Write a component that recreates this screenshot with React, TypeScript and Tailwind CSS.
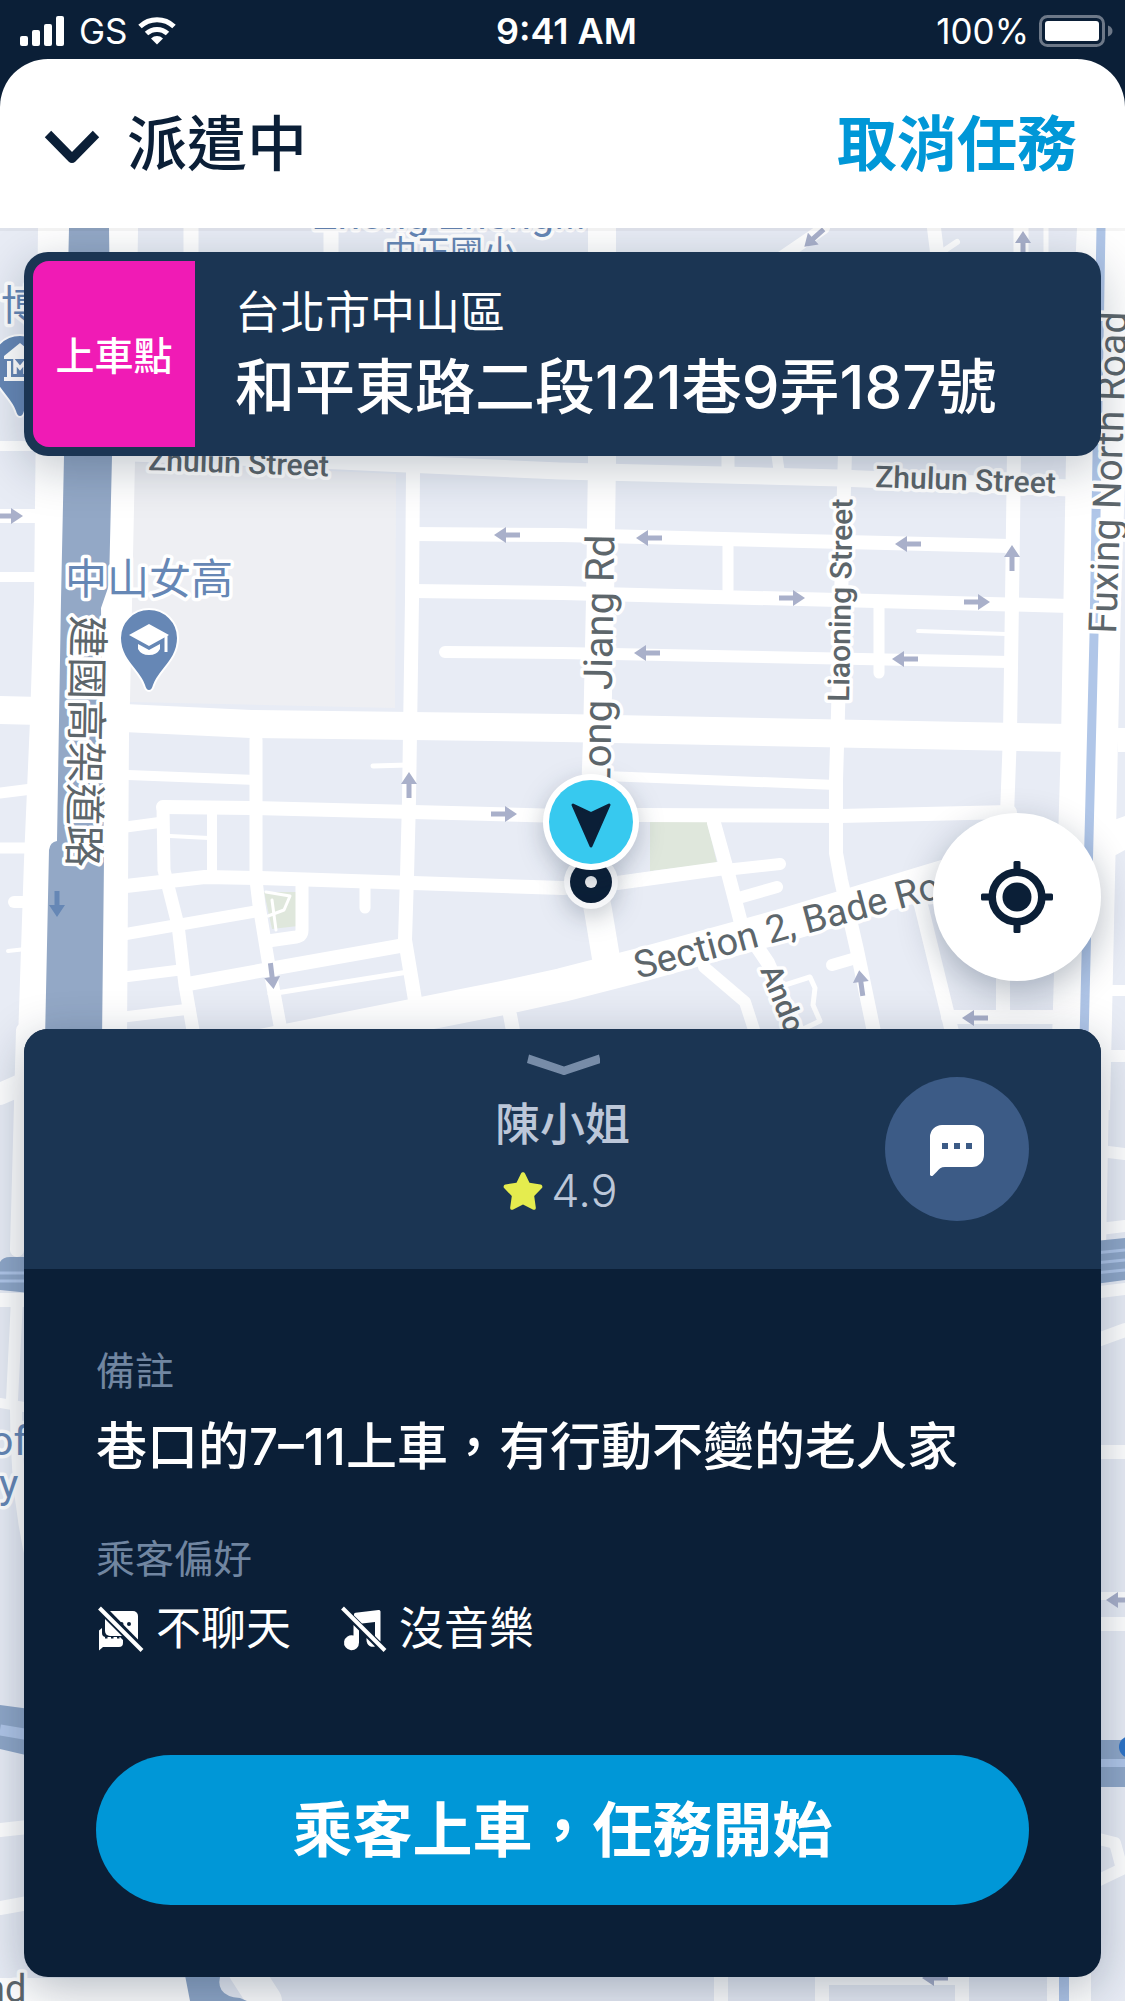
import React from 'react';

const fontStack = "font-['Inter','Noto_Sans_CJK_TC',sans-serif]";

/* ---------- Icons ---------- */

const SignalIcon = () => (
  <svg className="w-[45px] h-[30px]" viewBox="0 0 45 30" fill="white" aria-hidden="true">
    <rect x="0" y="20" width="8" height="10" rx="2" />
    <rect x="12" y="14" width="8" height="16" rx="2" />
    <rect x="24" y="8" width="8" height="22" rx="2" />
    <rect x="36" y="0" width="8" height="30" rx="2" />
  </svg>
);

const WifiIcon = () => (
  <svg className="w-[38px] h-[28px]" viewBox="0 0 38 28" fill="none" aria-hidden="true">
    <path d="M2 9.500C11.500 0.500 26.500 0.500 36 9.500" stroke="white" strokeWidth="5" />
    <path d="M8.500 16.500C14.500 11 23.500 11 29.500 16.500" stroke="white" strokeWidth="5" />
    <path d="M13 21.500C16.500 18.200 21.500 18.200 25 21.500L19 27.500Z" fill="white" />
  </svg>
);

const BatteryIcon = () => (
  <svg className="w-[74px] h-8" viewBox="0 0 74 32" fill="none" aria-hidden="true">
    <rect x="1.500" y="1.500" width="63" height="29" rx="7" stroke="#6d7888" strokeWidth="3" />
    <rect x="6" y="6" width="54" height="20" rx="3" fill="white" />
    <path d="M69 10.500C75 12.500 75 19.500 69 21.500Z" fill="#6d7888" />
  </svg>
);

const ChevronIcon = () => (
  <svg className="w-14 h-10" viewBox="0 0 56 40" fill="none" aria-hidden="true">
    <path d="M4 10L28 34.500L52 10" stroke="#0b1f37" strokeWidth="9" strokeLinejoin="round" />
  </svg>
);

const LocateIcon = () => (
  <svg className="w-[72px] h-[72px]" viewBox="0 0 72 72" fill="none" aria-hidden="true">
    <g fill="#0b1f37">
      <rect x="32.500" y="0" width="7" height="12" rx="1.500" />
      <rect x="32.500" y="60" width="7" height="12" rx="1.500" />
      <rect x="0" y="32.500" width="12" height="7" rx="1.500" />
      <rect x="60" y="32.500" width="12" height="7" rx="1.500" />
      <circle cx="36" cy="36" r="14.500" />
    </g>
    <circle cx="36" cy="36" r="24.800" stroke="#0b1f37" strokeWidth="7.600" />
  </svg>
);

const ChatIcon = () => (
  <svg className="w-[54px] h-[52px]" viewBox="0 0 54 52" aria-hidden="true">
    <path
      d="M12 0H42A12 12 0 0 1 54 12V30A12 12 0 0 1 42 42H15C11 42 9 44 7 46.500L3 50.500C2 51.500 0 51 0 49.500V12A12 12 0 0 1 12 0Z"
      fill="white"
    />
    <path d="M12 18h6v6h-6zM24 18h6v6h-6zM36 18h6v6h-6z" fill="#3c5b86" />
  </svg>
);

const StarIcon = () => (
  <svg className="w-10 h-[38px]" viewBox="0 0 40 38" aria-hidden="true">
    <path
      d="M18 1.500C18.800 -0.200 21.200 -0.200 22 1.500L26.500 10.800L37.500 12.400C39.400 12.700 40 15 38.700 16.300L31.200 24L32.800 35.500C33.100 37.300 31.300 38.300 29.800 37.500L20 32.600L10.200 37.500C8.700 38.300 6.900 37.300 7.200 35.500L8.800 24L1.300 16.300C0 15 0.600 12.700 2.500 12.400L13.500 10.800Z"
      fill="#e5ec4e"
    />
  </svg>
);

const ChatOffIcon = () => (
  <svg className="w-12 h-12" viewBox="0 0 48 48" aria-hidden="true">
    <path d="M14 6H37A5 5 0 0 1 42 11V34.500L37.500 30Z" fill="white" />
    <path d="M9 14L26 31H14A5 5 0 0 1 9 26Z" fill="white" />
    <path d="M3 25.500L6 23V28A4 4 0 0 0 10 32H24L27 35V38A4 4 0 0 1 23 42H7L3 45.500Z" fill="white" />
    <circle cx="25.500" cy="19" r="2" fill="#0b1f37" />
    <circle cx="33" cy="19" r="2" fill="#0b1f37" />
    <path d="M9 32.500h2.500M15 32.500h2.500M21 32.500h2.500" stroke="#0b1f37" strokeWidth="2" />
    <path d="M3.500 3L46 45.500" stroke="white" strokeWidth="4" />
  </svg>
);

const MusicOffIcon = () => (
  <svg className="w-12 h-12" viewBox="0 0 48 48" aria-hidden="true">
    <path d="M15 9.500C15 8.500 15.700 7.800 16.600 7.700L39.500 5C40.500 4.900 41.500 5.600 41.500 6.600V36.500L36 31V17L23 18.500L15 10.500Z" fill="white" />
    <path d="M14.500 20L20 25.500V37.500A7.500 7.500 0 1 1 14.500 30.500Z" fill="white" />
    <path d="M27.500 33L36 41.500C31 43 27 39.500 27.500 33Z" fill="white" />
    <path d="M3.500 3L46 45.500" stroke="white" strokeWidth="4" />
  </svg>
);

/* ---------- Map ---------- */

// [width, path]
const roads: [number, string][] = [
  // west side
  [10, 'M0 446H40'],
  [14, 'M0 516H40'],
  [10, 'M0 577H40'],
  [28, 'M0 710L40 711'],
  [11, 'M0 793L32 789'],
  [11, 'M0 848H32'],
  [12, 'M14 902H32'],
  [4, 'M8 951L26 949'],
  // top edge
  [15, 'M191 228V260'],
  [15, 'M331 228V260'],
  [14, 'M934 228L938 260'],
  [15, 'M1021 228V260'],
  [5, 'M1046 228V260'],
  [12, 'M824 228L780 258'],
  [6, 'M942 252L957 242'],
  // east-west streets
  [17, 'M130 453L340 461L560 471L840 478L1070 488'],
  [14, 'M413 534L562 535L1010 546'],
  [14, 'M413 591L562 593L1070 606'],
  [12, 'M445 652L562 653L1010 662'],
  [4, 'M918 631L1006 634'],
  [28, 'M124 718L251 724L563 728L1070 738'],
  [10, 'M128 775L256 780'],
  [5, 'M373 766L408 765'],
  [14, 'M163 807L251 808L413 812L562 816L640 815L840 816L1010 812'],
  [10, 'M605 776L836 785'],
  [14, 'M126 886L205 877L260 878L413 883L563 888L617 883L725 868'],
  [12, 'M725 870L780 864'],
  // north-south streets
  [14, 'M413 470L412 600L409 800L407 876L405 940L415 1000'],
  [28, 'M602 228V460L600 600L597 740L592 880L598 910L608 970'],
  [14, 'M845 452L844 487L838 713L836 780V853L841 880L857 950L874 1032'],
  [14, 'M1014 452L1012 600L1010 733L1007 815'],
  [14, 'M1003 960V1012'],
  [13, 'M728 456V470'],
  [11, 'M728 546V590M777 456L779 470'],
  [11, 'M879 606V673'],
  [13, 'M163 807L164 870L178 925L185 985L194 1036'],
  [10, 'M212 812V876'],
  [4, 'M170 836L209 838'],
  [13, 'M256 740V880L259 905L268 960L282 1036'],
  [11, 'M126 827L163 822'],
  [12, 'M126 934L258 911'],
  [11, 'M124 977L180 970'],
  [14, 'M188 984L270 969L405 945'],
  [5, 'M270 994L408 972'],
  [11, 'M124 1017L190 1009'],
  [13, 'M302 885V930Q302 936 296 937L268 941'],
  [11, 'M365 885V908'],
  // Bade Road and what branches off it
  [34, 'M230 1052L503 998L562 985L640 965L785 925L960 872'],
  [14, 'M714 823L729 877L741 923L768 963L800 1036'],
  [12, 'M742 897L777 887'],
  [12, 'M832 965L856 958'],
  [12, 'M704 967L745 1002L756 1036'],
  [5, 'M785 985L810 977L815 988L813 1005L820 1021L795 1033'],
  [14, 'M921 905L953 1036'],
  [14, 'M948 1017H1060'],
  [14, 'M510 1015L514 1036'],
  // lower west strip
  [22, 'M0 1094L32 1080'],
  [14, 'M23 1030L17 1250'],
  [14, 'M0 1300H28'],
  [12, 'M17 1300L12 1400'],
  [10, 'M0 1403L30 1408'],
  [12, 'M16 1408Q16 1500 34 1570'],
  [14, 'M0 1830L28 1827'],
  [14, 'M0 1908L28 1903'],
  [40, 'M0 1998H190'],
  // lower east strip
  [12, 'M1100 1056H1125'],
  [12, 'M1100 1151L1125 1154'],
  [12, 'M1100 1229L1125 1226'],
  [12, 'M1100 1292L1125 1289'],
  [14, 'M1095 1341L1125 1330'],
  [14, 'M1100 1452H1125'],
  [8, 'M1100 1596H1125'],
  [14, 'M1100 1624H1125'],
  [12, 'M1095 1838L1115 1843L1122 1869L1095 1882'],
  // south edge
  [34, 'M245 1970L265 2001'],
  [14, 'M721 1970V2001M822 1970V2001M962 1970V2001'],
  [8, 'M822 1981H962'],
];

// x, y, rotation of a right-pointing arrow
const arrows: [number, number, number][] = [
  [10, 516, 0],
  [507, 535, 180],
  [649, 538, 180],
  [908, 544, 180],
  [792, 598, 0],
  [977, 602, 0],
  [647, 653, 180],
  [905, 659, 180],
  [1012, 558, -90],
  [1023, 244, -90],
  [814, 238, 138],
  [409, 785, -90],
  [504, 814, 0],
  [272, 976, 83],
  [861, 983, -98],
  [975, 1018, 180],
  [1119, 1600, 180],
  [935, 1978, 180],
];

const MapArrow = ({ x, y, r, fill = '#a9b0ca' }: { x: number; y: number; r: number; fill?: string }) => (
  <path d="M-13 -2.500H1V-8L13 0L1 8V2.500H-13Z" fill={fill} transform={`translate(${x} ${y}) rotate(${r})`} />
);

const MapPin = ({ x, y, children }: { x: number; y: number; children: React.ReactNode }) => (
  <g transform={`translate(${x} ${y})`}>
    <path
      d="M0 53C-2 53 -4 51 -5 47C-10 32 -29 22 -29 0A29 29 0 0 1 29 0C29 22 10 32 5 47C4 51 2 53 0 53Z"
      fill="#6687b5"
      stroke="white"
      strokeWidth="2"
    />
    {children}
  </g>
);

const CityMap = () => (
  <svg
    className="absolute inset-0 w-full h-full"
    viewBox="0 228 1125 1773"
    preserveAspectRatio="xMidYMin slice"
    role="img"
    aria-label="地圖"
  >
    <rect x="0" y="228" width="1125" height="1773" fill="#e8ecf5" />
    <path d="M130 462L396 474L395 708L130 702Z" fill="#eeeff3" />
    <path d="M650 822H707L717 863L650 871Z" fill="#dfe7dc" />
    <path d="M264 892H298V926L272 929Z" fill="#dfe7dc" />

    <g fill="none" stroke="white" strokeLinecap="round" strokeLinejoin="round">
      {roads.map(([width, d]) => (
        <path key={d} d={d} strokeWidth={width} />
      ))}
      <path d="M266 892L290 896L284 910L268 916M272 900L276 930" strokeWidth="3" />
    </g>

    {/* Jianguo elevated road */}
    <path d="M38 228L34 600L30 720L24 860L18 1040H127L129 735L130 700L135 460L138 228Z" fill="white" />
    <path d="M69 228H109L112 456L109 585L101 608L104 860L102 1040H45L49 850Q50 842 57 841L61 600L64 456Z" fill="#93a8c6" />
    <MapArrow x={57} y={904} r={90} fill="#6687b5" />

    {/* Fuxing North Road */}
    <path d="M1077 228L1066 456L1061 740L1052 1040L1048 1110H1110L1118 740L1121 600L1125 480V228Z" fill="white" />
    <path d="M1110 1040L1106 1250H1090L1096 1040Z" fill="white" />
    <path d="M1118 728H1125V752H1118ZM1114 820L1125 816V850L1114 856ZM1110 985H1125V996H1110Z" fill="white" />
    <path d="M1101 228L1097 456L1094 635L1084 1040" stroke="#b0c6e8" strokeWidth="9" fill="none" />
    <path d="M1069 1970V2001" stroke="white" strokeWidth="44" />
    <path d="M1064 1970V2001" stroke="#b0c6e8" strokeWidth="10" />

    {/* highways on both sides of the sheet */}
    <path d="M0 1262Q3 1257 10 1257H30V1293L0 1290Z" fill="#8fa7c8" />
    <path d="M0 1273H30M0 1281H30" stroke="#b0c6e8" strokeWidth="3" />
    <path d="M0 1705L30 1709V1756L0 1749Z" fill="#8fa7c8" />
    <path d="M0 1730L30 1735" stroke="#b0c6e8" strokeWidth="11" />
    <path d="M1095 1241L1125 1238V1280L1095 1284Z" fill="#8fa7c8" />
    <path d="M1095 1253L1125 1250M1095 1263L1125 1260M1095 1273L1125 1270" stroke="#b0c6e8" strokeWidth="3" />
    <path d="M1095 1740H1125V1787H1095Z" fill="#8fa7c8" />
    <path d="M1095 1763H1125" stroke="#b0c6e8" strokeWidth="8" />
    <circle cx="1130" cy="1747" r="11" fill="#2f74c6" />
    <path d="M184 1970L190 2001H247L240 1998Q212 1996 222 1970Z" fill="#8fa7c8" />

    {arrows.map(([x, y, r]) => (
      <MapArrow key={`${x}-${y}`} x={x} y={y} r={r} />
    ))}

    <MapPin x={20} y={364}>
      <path d="M-16 -8L0 -21L16 -8V-5H-16ZM-13 -3H-9V13H-13ZM9 -3H13V13H9ZM-16 13H16V17H-16Z" fill="white" />
      <path d="M-5 10V-2L0 4L5 -2V10" fill="none" stroke="white" strokeWidth="3.500" />
    </MapPin>
    <MapPin x={149} y={638}>
      <path d="M0 -14L20 -3L0 8L-20 -3Z" fill="white" />
      <path d="M-11 6L0 12L11 6V11Q8 17 0 17Q-8 17 -11 11Z" fill="white" />
      <path d="M17 -3V14" stroke="white" strokeWidth="3" />
    </MapPin>

    <g
      className="font-['Roboto','Noto_Sans_CJK_TC',sans-serif]"
      fill="#5d666b"
      stroke="white"
      strokeWidth="7"
      strokeLinejoin="round"
      paintOrder="stroke"
    >
      <g fill="#6687b5">
        <text x="313" y="229" fontSize="41">Zhong Zheng...</text>
        <text x="384" y="264" fontSize="33">中正國小</text>
        <text x="1" y="320" fontSize="41">博</text>
        <text x="65" y="594" fontSize="42">中山女高</text>
        <text x="-10" y="1455" fontSize="41">of</text>
        <text x="-1" y="1498" fontSize="41">y</text>
      </g>
      <text x="-16" y="2002" fontSize="38">nd</text>
      <text transform="translate(73 615) rotate(91)" fontSize="42">建國高架道路</text>
      <text transform="translate(148 470) rotate(2)" fontSize="30" fontWeight="500">Zhulun Street</text>
      <text transform="translate(875 487) rotate(2)" fontSize="30" fontWeight="500">Zhulun Street</text>
      <text transform="translate(610 789) rotate(-89)" fontSize="40">Long Jiang Rd</text>
      <text transform="translate(849 702) rotate(-89)" fontSize="30" fontWeight="500">Liaoning Street</text>
      <text transform="translate(1116 634) rotate(-88)" fontSize="39">Fuxing North Road</text>
      <text transform="translate(638 979) rotate(-15)" fontSize="38">Section 2, Bade Road</text>
      <text transform="translate(760 970) rotate(68)" fontSize="30" fontWeight="500">Andong</text>
    </g>

    {/* pickup point and vehicle */}
    <g className="drop-shadow-[0_8px_12px_rgba(11,31,55,0.25)]">
      <circle cx="591" cy="882" r="27" fill="#f5f6f8" />
      <circle cx="591" cy="882" r="21" fill="#0b1f37" />
      <circle cx="591" cy="882" r="6" fill="#f0f1f3" />
    </g>
    <g className="drop-shadow-[0_8px_12px_rgba(11,31,55,0.25)]">
      <circle cx="591" cy="822" r="48" fill="white" />
      <circle cx="591" cy="822" r="42" fill="#37c9ef" />
      <path
        d="M573 805L591 813.500L609 805L591 846Z"
        fill="#0b1f37"
        stroke="#0b1f37"
        strokeWidth="3"
        strokeLinejoin="round"
      />
    </g>
  </svg>
);

/* ---------- Screen ---------- */

const StatusBar = () => (
  <div className="h-[59px] pt-[2px] pl-5 pr-3 grid grid-cols-[1fr_auto_1fr] items-center text-white text-[35px] leading-[40px]">
    <div className="flex items-center gap-[14px]">
      <SignalIcon />
      <div className="flex items-center gap-[10px]">
        <span>GS</span>
        <WifiIcon />
      </div>
    </div>
    <div className="text-[36px] font-semibold">9:41 AM</div>
    <div className="flex items-center justify-end gap-[10px]">
      <span>100%</span>
      <BatteryIcon />
    </div>
  </div>
);

const Header = () => (
  <header className="relative z-10 h-[169px] pl-11 pr-12 bg-white rounded-t-[48px] flex items-center justify-between text-[60px] leading-[72px] font-medium shadow-[0_3px_0_rgba(0,0,0,0.04)]">
    <div className="flex items-center gap-[27px]">
      <button type="button" aria-label="收合">
        <ChevronIcon />
      </button>
      <h1 className="text-[#0b1f37]">派遣中</h1>
    </div>
    <button type="button" className="text-[#0097d7] font-bold">取消任務</button>
  </header>
);

const PickupCard = () => (
  <section className="p-[9px] bg-[#1b3553] rounded-3xl flex gap-10 text-white shadow-[0_12px_48px_rgba(11,31,55,0.25)]">
    <div className="w-[162px] h-[186px] pt-[3px] shrink-0 bg-[#f01bb5] rounded-l-2xl flex items-center justify-center text-[39px] leading-[60px] font-medium">
      上車點
    </div>
    <div className="pt-[22px]">
      <p className="text-[45px] leading-[60px]">台北市中山區</p>
      <p className="mt-2 text-[60px] leading-[72px] font-medium">和平東路二段121巷9弄187號</p>
    </div>
  </section>
);

const preferences = [
  { label: '不聊天', icon: <ChatOffIcon /> },
  { label: '沒音樂', icon: <MusicOffIcon /> },
];

const PassengerSheet = () => (
  <section className="bg-[#0b1f37] rounded-3xl overflow-hidden shadow-[0_12px_48px_rgba(11,31,55,0.3)]">
    <div className="h-60 px-[72px] bg-[#1b3553] grid grid-cols-[1fr_auto_1fr]">
      <div className="col-start-2 pt-6 flex flex-col items-center text-[#bcc7d9] text-[45px] leading-[60px]">
        <button type="button" aria-label="收合乘客資訊">
          <svg className="w-[76px] h-6" viewBox="-2 0 76 24" fill="none" aria-hidden="true">
            <path d="M3 1.500L38 13.500L73 1.500L75 10L40 21.500Q38 22.500 36 21.500L1 10Z" fill="#778ca8" />
          </svg>
        </button>
        <h2 className="mt-[18px] font-medium">陳小姐</h2>
        <div className="mt-[6px] pr-1 flex items-center gap-2">
          <StarIcon />
          <span className="font-light">4.9</span>
        </div>
      </div>
      <button
        type="button"
        aria-label="傳送訊息"
        className="w-36 h-36 pt-1 rounded-full bg-[#3c5b86] flex items-center justify-center justify-self-end self-center"
      >
        <ChatIcon />
      </button>
    </div>

    <div className="p-[72px] text-white">
      <h3 className="text-[39px] leading-[60px] text-[#7186a1]">備註</h3>
      <p className="mt-[10px] text-[51px] leading-[72px] font-medium">巷口的7–11上車，有行動不變的老人家</p>
      <h3 className="mt-[46px] text-[39px] leading-[60px] text-[#7186a1]">乘客偏好</h3>
      <ul className="mt-[10px] flex gap-12 text-[45px] leading-[60px]">
        {preferences.map(({ label, icon }) => (
          <li key={label} className="flex items-center gap-3">
            {icon}
            {label}
          </li>
        ))}
      </ul>
      <button
        type="button"
        className="mt-24 w-full h-[150px] rounded-full bg-[#0097d7] text-[60px] leading-[72px] font-bold"
      >
        乘客上車，任務開始
      </button>
    </div>
  </section>
);

export default function App() {
  return (
    <div lang="zh-TW" className={`min-h-screen bg-[#0b1f37] flex flex-col ${fontStack}`}>
      <StatusBar />
      <Header />
      <main className="relative flex-1 flex flex-col overflow-hidden">
        <CityMap />
        <div className="relative flex-1 flex flex-col p-6">
          <PickupCard />
          <button
            type="button"
            aria-label="目前位置"
            className="mt-auto mb-12 w-[168px] h-[168px] shrink-0 self-end rounded-full bg-white flex items-center justify-center shadow-[0_12px_36px_rgba(11,31,55,0.3)]"
          >
            <LocateIcon />
          </button>
          <PassengerSheet />
        </div>
      </main>
    </div>
  );
}
